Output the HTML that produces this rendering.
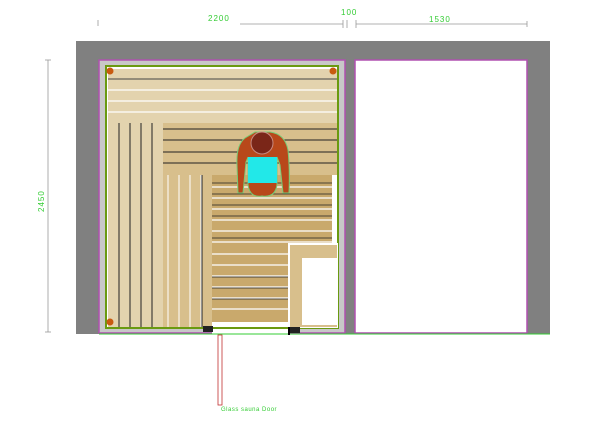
<!DOCTYPE html>
<html><head><style>body{margin:0;background:#fff;width:600px;height:440px;overflow:hidden}svg{display:block}</style></head><body>
<svg width="600" height="440" viewBox="0 0 600 440" xmlns="http://www.w3.org/2000/svg" font-family="Liberation Sans, sans-serif">
<g stroke="#999" stroke-width="0.8" fill="none">
<line x1="240" y1="24" x2="343" y2="24"/><line x1="343" y1="20" x2="343" y2="28"/><line x1="347" y1="20" x2="347" y2="28"/>
<line x1="356" y1="24" x2="527" y2="24"/><line x1="356" y1="20" x2="356" y2="28"/><line x1="527" y1="21" x2="527" y2="27"/>
<line x1="48" y1="60" x2="48" y2="332"/><line x1="45" y1="60" x2="51" y2="60"/><line x1="45" y1="332" x2="51" y2="332"/>
<line x1="98" y1="20" x2="98" y2="26"/>
</g>
<g fill="#3c3" font-size="8" letter-spacing="1">
<text x="208" y="21">2200</text><text x="341" y="15">100</text><text x="429" y="22">1530</text>
<text x="0" y="0" transform="translate(44,212) rotate(-90)">2450</text>
<text x="221" y="411" font-size="6" letter-spacing="0.5">Glass sauna Door</text>
</g>
<rect x="76" y="41" width="474" height="293" fill="#808080"/>
<rect x="99" y="60" width="246" height="273" fill="#c8c8c8" stroke="#b050b0" stroke-width="1.5"/>
<rect x="355" y="60" width="172" height="273" fill="#fff" stroke="#b050b0" stroke-width="1.5"/>
<rect x="212" y="322" width="76" height="12" fill="#fff"/>
<line x1="99" y1="334" x2="550" y2="334" stroke="#3c3" stroke-width="1"/>
<rect x="106" y="66" width="232" height="262" fill="#fff" stroke="#6a9a10" stroke-width="2"/>
<rect x="108" y="69" width="229" height="54" fill="#e3d3ae"/>
<g stroke="#fff" stroke-width="1.2"><line x1="108" y1="90" x2="337" y2="90"/><line x1="108" y1="101" x2="337" y2="101"/><line x1="108" y1="112" x2="337" y2="112"/></g>
<line x1="108" y1="79" x2="337" y2="79" stroke="#444"/>
<rect x="108" y="123" width="55" height="204" fill="#e3d3ae"/>
<g stroke="#222" stroke-width="1"><line x1="119" y1="123" x2="119" y2="327"/><line x1="130" y1="123" x2="130" y2="327"/><line x1="141" y1="123" x2="141" y2="327"/><line x1="152" y1="123" x2="152" y2="327"/></g>
<rect x="163" y="123" width="174" height="52" fill="#d8bf8c"/>
<g stroke="#222" stroke-width="1"><line x1="163" y1="129" x2="337" y2="129"/><line x1="163" y1="140" x2="337" y2="140"/><line x1="163" y1="152" x2="337" y2="152"/><line x1="163" y1="163" x2="337" y2="163"/></g>
<rect x="163" y="175" width="49" height="152" fill="#d8bf8c"/>
<g stroke="#fff" stroke-width="1"><line x1="168" y1="175" x2="168" y2="327"/><line x1="179" y1="175" x2="179" y2="327"/><line x1="190" y1="175" x2="190" y2="327"/><line x1="201" y1="175" x2="201" y2="327"/></g>
<line x1="202" y1="175" x2="202" y2="327" stroke="#222"/>
<rect x="212" y="175" width="120" height="147" fill="#c9a96c"/>
<g stroke="#fff" stroke-width="1.2"><line x1="212" y1="187" x2="332" y2="187"/><line x1="212" y1="198" x2="332" y2="198"/><line x1="212" y1="209" x2="332" y2="209"/><line x1="212" y1="220" x2="332" y2="220"/><line x1="212" y1="231" x2="332" y2="231"/><line x1="212" y1="242" x2="332" y2="242"/><line x1="212" y1="254" x2="288" y2="254"/><line x1="212" y1="265" x2="288" y2="265"/><line x1="212" y1="276" x2="288" y2="276"/><line x1="212" y1="287" x2="288" y2="287"/><line x1="212" y1="298" x2="288" y2="298"/><line x1="212" y1="309" x2="288" y2="309"/></g>
<g stroke="#222" stroke-width="0.8"><line x1="212" y1="183" x2="332" y2="183"/><line x1="212" y1="194" x2="332" y2="194"/><line x1="212" y1="205" x2="332" y2="205"/><line x1="212" y1="216" x2="332" y2="216"/><line x1="212" y1="238" x2="332" y2="238"/><line x1="212" y1="277" x2="288" y2="277"/><line x1="212" y1="288" x2="288" y2="288"/><line x1="212" y1="299" x2="288" y2="299"/></g>
<rect x="288" y="243" width="50" height="85" fill="#fff"/>
<rect x="290" y="245" width="47" height="82" fill="#d8bf8c"/>
<rect x="302" y="258" width="35" height="67" fill="#fff"/>
<g fill="#c85a10"><circle cx="110" cy="71" r="3.5"/><circle cx="333" cy="71" r="3.5"/><circle cx="110" cy="322" r="3.5"/></g>
<rect x="203" y="326" width="10" height="6" fill="#222"/><rect x="290" y="327" width="10" height="6" fill="#222"/>
<rect x="288" y="327" width="2" height="8" fill="#000"/>
<rect x="218" y="335" width="4" height="70" fill="none" stroke="#c03030" stroke-width="0.8"/>
<g stroke="#7c7" stroke-width="1">
<path d="M245 138 Q236 145 237 165 L238 193 L243 193 L246 162 L248 157 L248 185 Q250 198 262 196 Q275 198 277 185 L277 157 L280 165 L283 193 L289 193 Q290 170 288 150 Q285 134 270 132 L255 132 Z" fill="#b8481a"/>
<rect x="248" y="157" width="29" height="26" fill="#22e8e8" stroke="none"/>
<circle cx="262" cy="143" r="11" fill="#7a2618" stroke="#c88a80"/>
</g>
</svg>
</body></html>
